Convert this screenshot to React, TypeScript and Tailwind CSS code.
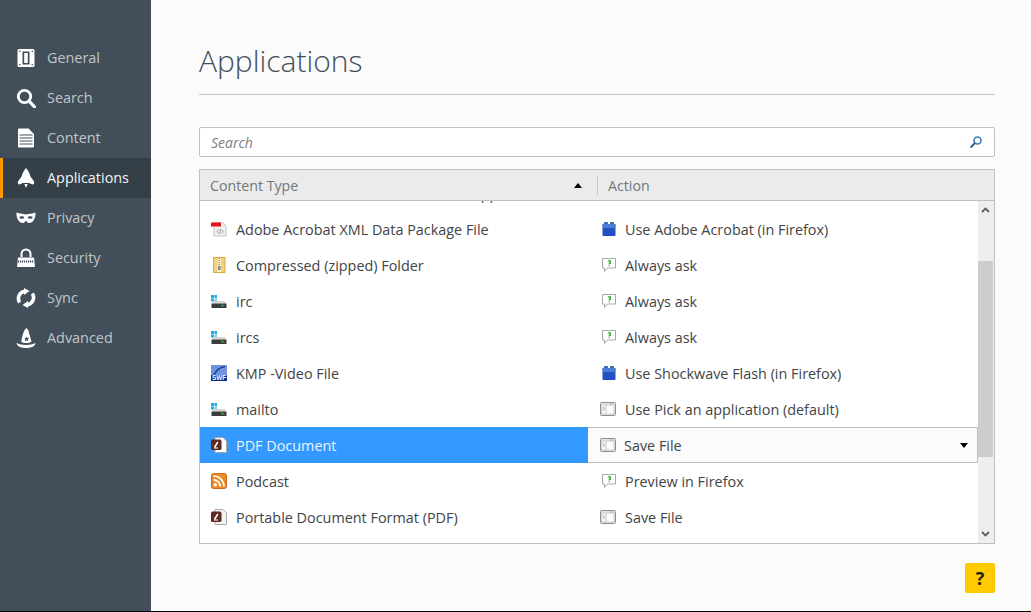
import { ReactNode } from "react";

const font = "font-['Open_Sans',sans-serif]";

// Sidebar icons, all drawn in a 20x20 box
function GeneralIcon() {
  return (
    <svg width="20" height="20" viewBox="0 0 20 20">
      <rect x="1.500" y="1" width="17" height="18" rx="1.500" fill="#fff" />
      <rect x="6.500" y="3.500" width="7" height="13" fill="#424f5a" />
      <rect x="8.200" y="5" width="3.600" height="10" fill="#fff" />
      <circle cx="3.700" cy="3.200" r=".8" fill="#424f5a" />
      <circle cx="16.300" cy="3.200" r=".8" fill="#424f5a" />
      <circle cx="3.700" cy="16.800" r=".8" fill="#424f5a" />
      <circle cx="16.300" cy="16.800" r=".8" fill="#424f5a" />
    </svg>
  );
}

function SearchIcon() {
  return (
    <svg width="20" height="20" viewBox="0 0 20 20" fill="none" stroke="#fff">
      <circle cx="8.500" cy="8.500" r="6.200" strokeWidth="2.800" />
      <path d="M13 13L18.500 18.800" strokeWidth="3.200" strokeLinecap="round" />
    </svg>
  );
}

function ContentIcon() {
  return (
    <svg width="20" height="20" viewBox="0 0 20 20">
      <path d="M2 1.500a1 1 0 0 1 1-1h9.500L18 6v12.500a1 1 0 0 1-1 1H3a1 1 0 0 1-1-1z" fill="#fff" />
      <path d="M3.500 7h13M3.500 10h13M3.500 13h13M3.500 16h13" stroke="#424f5a" strokeWidth="1" />
    </svg>
  );
}

function RocketIcon() {
  return (
    <svg width="20" height="20" viewBox="0 0 20 20" fill="#fff">
      <path d="M10 0C12 2 13.500 5 14.500 8.500L18 13.500C18.500 15 18 16.500 16.500 16.500L13 15H7L3.500 16.500C2 16.500 1.500 15 2 13.500L5.500 8.500C6.500 5 8 2 10 0Z" />
      <path d="M8.300 16h3.400L10 20z" />
    </svg>
  );
}

function MaskIcon() {
  return (
    <svg width="20" height="20" viewBox="0 0 20 20">
      <path d="M.5 4.500C4 6 7 5.500 10 6.500C13 5.500 16 6 19.500 4.500C20 10 17 15 13 15C11.200 15 11 13 10 13C9 13 8.800 15 7 15C3 15 0 10 .5 4.500Z" fill="#fff" />
      <ellipse cx="5.800" cy="9.500" rx="2.400" ry="1.300" fill="#424f5a" />
      <ellipse cx="14.200" cy="9.500" rx="2.400" ry="1.300" fill="#424f5a" />
    </svg>
  );
}

function LockIcon() {
  return (
    <svg width="20" height="20" viewBox="0 0 20 20">
      <path d="M5.500 9V6a4.500 4.500 0 0 1 9 0v3" fill="none" stroke="#fff" strokeWidth="2" />
      <path d="M2 9.500h16l1 9.500H1z" fill="#fff" />
      <path d="M2 13.500h16" stroke="#424f5a" strokeWidth="2.200" strokeDasharray="1.200 .8" />
    </svg>
  );
}

function SyncIcon() {
  return (
    <svg width="20" height="20" viewBox="0 0 20 20" fill="none" stroke="#fff" strokeWidth="3.600">
      <path d="M3.600 14.500C1 10 3 4.500 8.500 3.200" />
      <path d="M16.400 5.500C19 10 17 15.500 11.500 16.800" />
      <path d="M8 0L13.500 3 8 7z" fill="#fff" stroke="none" />
      <path d="M12 13L6.500 17l5.500 3z" fill="#fff" stroke="none" />
    </svg>
  );
}

function HatIcon() {
  return (
    <svg width="20" height="20" viewBox="0 0 20 20">
      <path d="M10.500 0C8 2 6.800 5.500 5.200 13.500C7.500 15.500 13 15.500 15.500 13.500L13.500 6.500C13 5 12.500 4 12.700 2.700z" fill="#fff" />
      <path d="M.5 15C3 16 6 17 10 17C14 17 17 16 19.500 15C19.500 18 15 20 10 20C5 20 .5 18 .5 15Z" fill="#fff" />
      <path d="M10.500 8l.8 1.800 1.900.2-1.400 1.300.4 1.900-1.700-1-1.700 1 .4-1.900L8.800 10l1.900-.2z" fill="#424f5a" />
    </svg>
  );
}

// File type icons, 16x16
function PdfXmlIcon() {
  return (
    <svg width="16" height="16" viewBox="0 0 16 16">
      <path d="M3 1.500h8.500L15 5v10H3z" fill="#f0f0f0" stroke="#c9c9c9" />
      <rect x="0" y="1.500" width="10" height="4" fill="#e8141a" />
      <path d="M7.500 8.500L6 10.500l1.500 2M10.500 8.500l1.500 2-1.500 2M9.500 8L8.500 13" fill="none" stroke="#8a8a8a" strokeWidth=".8" />
    </svg>
  );
}

function ZipIcon() {
  return (
    <svg width="16" height="16" viewBox="0 0 16 16">
      <rect x="2.500" y="0.500" width="11.500" height="15" fill="#f4d27a" stroke="#d9ab3e" />
      <rect x="6.500" y="1" width="3.500" height="14" fill="#fff3c9" />
      <path d="M8.200 1v9" stroke="#777" strokeWidth="1.200" strokeDasharray="1 1" />
      <rect x="7" y="9" width="2.600" height="4" fill="#888" />
    </svg>
  );
}

function DriveIcon() {
  return (
    <svg width="16" height="16" viewBox="0 0 16 16">
      <rect x="0" y="2" width="3" height="3" fill="#26a9e0" />
      <rect x="3.500" y="2" width="2.500" height="3" fill="#26a9e0" />
      <rect x="0" y="5.500" width="3" height="3" fill="#26a9e0" />
      <rect x="3.500" y="5.500" width="2.500" height="3" fill="#7fd0f0" />
      <path d="M3 8h10.500l2 2.500H.5z" fill="#d4d4d4" />
      <rect x="0.500" y="10.500" width="15" height="4.500" rx=".5" fill="#3d3d3d" />
      <rect x="10.500" y="12" width="2" height="1.200" fill="#3fdc4b" />
    </svg>
  );
}

function SwfIcon() {
  return (
    <svg width="16" height="16" viewBox="0 0 16 16">
      <rect width="16" height="16" fill="#0b2f8f" />
      <rect width="16" height="10" fill="#6f93dc" />
      <path d="M3 10C5 5 9 2.500 14 1.500" fill="none" stroke="#1d3f96" strokeWidth="1.500" />
      <text x="8" y="15.200" textAnchor="middle" fontSize="6.400" fontWeight="700" fill="#fff" fontFamily="'Liberation Sans',sans-serif">
        SWF
      </text>
    </svg>
  );
}

function AcrobatIcon({ bright }: { bright?: boolean }) {
  return (
    <svg width="16" height="16" viewBox="0 0 16 16">
      <path d="M4 .5h8L15.500 4v11.500H4z" fill={bright ? "#fff" : "#f4f4f4"} stroke="#a9a9a9" />
      <rect x="0" y="2.500" width="10.500" height="10.500" rx="1.500" fill="#5e2a22" />
      <path d="M3.500 10.500L6.800 5" stroke="#fff" strokeWidth="1.500" />
      <path d="M3 11h4" stroke="#fff" strokeWidth="1" />
    </svg>
  );
}

function RssIcon() {
  return (
    <svg width="16" height="16" viewBox="0 0 16 16">
      <rect x=".5" y=".5" width="15" height="15" rx="2" fill="#ee8a24" stroke="#d2691a" />
      <circle cx="4.200" cy="11.800" r="1.700" fill="#fff" />
      <path d="M2.500 6.800a6.700 6.700 0 0 1 6.700 6.700M2.500 3a10.500 10.500 0 0 1 10.500 10.500" fill="none" stroke="#fff" strokeWidth="1.700" />
    </svg>
  );
}

function BlockIcon() {
  return (
    <svg width="16" height="16" viewBox="0 0 16 16">
      <rect x="3" y="1" width="4" height="3" rx="1" fill="#3d66b8" />
      <rect x="9" y="1" width="4" height="3" rx="1" fill="#3d66b8" />
      <rect x="1.500" y="3" width="13" height="12" rx="1" fill="#2350c0" />
      <rect x="1.500" y="3" width="13" height="4" fill="#4d7bd8" />
    </svg>
  );
}

function AskIcon() {
  return (
    <svg width="16" height="16" viewBox="0 0 16 16">
      <path d="M1.500 1.500h13v9.500H6.500L3.500 14.500V11h-2z" fill="#fff" stroke="#a8a8a8" />
      <path d="M6.800 3.800h2.600v2.400H8.300v1.300M8.300 8.200v1" fill="none" stroke="#2ea52e" strokeWidth="1.200" />
    </svg>
  );
}

function WindowIcon() {
  return (
    <svg width="16" height="16" viewBox="1 0 16 16" className="overflow-visible">
      <rect x="0.500" y="1.500" width="15" height="13" rx="1" fill="#e6e6e6" stroke="#8f8f8f" />
      <rect x="2" y="4" width="12" height="9" fill="#fdfdfd" stroke="#b5b5b5" strokeWidth=".6" />
      <path d="M6 4v9" stroke="#b5b5b5" strokeWidth=".8" />
      <path d="M3 7h2M3 9h2" stroke="#9a9a9a" strokeWidth=".8" />
      <path d="M10 3h4" stroke="#8f8f8f" strokeDasharray="1 1" />
    </svg>
  );
}

const navItems: { label: string; icon: ReactNode; active?: boolean }[] = [
  { label: "General", icon: <GeneralIcon /> },
  { label: "Search", icon: <SearchIcon /> },
  { label: "Content", icon: <ContentIcon /> },
  { label: "Applications", icon: <RocketIcon />, active: true },
  { label: "Privacy", icon: <MaskIcon /> },
  { label: "Security", icon: <LockIcon /> },
  { label: "Sync", icon: <SyncIcon /> },
  { label: "Advanced", icon: <HatIcon /> },
];

const rows: { type: string; icon: ReactNode; action?: string; actionIcon?: ReactNode; selected?: boolean }[] = [
  { type: "Adobe Acrobat Forms Data Format application", icon: <PdfXmlIcon /> },
  { type: "Adobe Acrobat XML Data Package File", icon: <PdfXmlIcon />, action: "Use Adobe Acrobat (in Firefox)", actionIcon: <BlockIcon /> },
  { type: "Compressed (zipped) Folder", icon: <ZipIcon />, action: "Always ask", actionIcon: <AskIcon /> },
  { type: "irc", icon: <DriveIcon />, action: "Always ask", actionIcon: <AskIcon /> },
  { type: "ircs", icon: <DriveIcon />, action: "Always ask", actionIcon: <AskIcon /> },
  { type: "KMP -Video File", icon: <SwfIcon />, action: "Use Shockwave Flash (in Firefox)", actionIcon: <BlockIcon /> },
  { type: "mailto", icon: <DriveIcon />, action: "Use Pick an application (default)", actionIcon: <WindowIcon /> },
  { type: "PDF Document", icon: <AcrobatIcon bright />, action: "Save File", actionIcon: <WindowIcon />, selected: true },
  { type: "Podcast", icon: <RssIcon />, action: "Preview in Firefox", actionIcon: <AskIcon /> },
  { type: "Portable Document Format (PDF)", icon: <AcrobatIcon />, action: "Save File", actionIcon: <WindowIcon /> },
];

function Sidebar() {
  return (
    <nav className="w-[151px] shrink-0 bg-[#424f5a] pt-[38px]">
      {navItems.map((item) => (
        <div
          key={item.label}
          className={`flex h-10 items-center border-l-[3px] pl-[13px] ${
            item.active ? "border-[#ff9500] bg-[#343f48] text-[#f2f4f5]" : "border-transparent text-[#c1c5c9]"
          }`}
        >
          <span className="flex w-5 justify-center">{item.icon}</span>
          <span className="ml-[11px] text-[14.4px]">{item.label}</span>
        </div>
      ))}
    </nav>
  );
}

function Row({ row }: { row: (typeof rows)[number] }) {
  if (row.selected) {
    return (
      <div className="flex h-9 items-stretch">
        <div className="flex w-[388px] shrink-0 items-center bg-[#3399ff] pl-[11px] text-[#eaf5ff]">
          {row.icon}
          <span className="ml-[9px] mt-[2px]">{row.type}</span>
        </div>
        <div className="flex flex-1 items-center border border-l-0 border-[#bdbdbd] bg-[#fbfbfb] pl-[13px] pr-[9px] text-[#3f4446]">
          {row.actionIcon}
          <span className="ml-[7px] mt-[2px]">{row.action}</span>
          <span className="ml-auto h-0 w-0 border-x-[4px] border-t-[5px] border-x-transparent border-t-black" />
        </div>
      </div>
    );
  }
  return (
    <div className="flex h-9 items-center text-[#3f4446]">
      <div className="flex w-[387px] shrink-0 items-center pl-[11px]">
        {row.icon}
        <span className="ml-[9px] mt-[2px] whitespace-nowrap">{row.type}</span>
      </div>
      <div className="flex flex-1 items-center pl-[14px]">
        {row.actionIcon}
        <span className="ml-[8px] mt-[2px] whitespace-nowrap">{row.action}</span>
      </div>
    </div>
  );
}

export default function App() {
  return (
    <div className={`flex h-[612px] w-[1031px] flex-col overflow-hidden bg-[#fbfbfb] text-[14.4px] ${font}`}>
      <div className="flex min-h-0 flex-1">
        <Sidebar />
        <main className="flex-1 pl-12 pr-9">
          <h1 className="flex h-[95px] items-start border-b border-[#c8c8c8] pt-[40px] text-[30px] font-light leading-[44px] text-[#424f5a]">
            <span className="-mt-[1px]">Applications</span>
          </h1>

          <div className="mt-8 flex h-[30px] items-center justify-between rounded-[2px] border border-[#c1c1c1] bg-white pl-[11px] pr-[11px]">
            <span className="text-[14px] italic text-[#7d7d7d]">Search</span>
            <svg width="14" height="14" viewBox="0 0 14 14" fill="none">
              <circle cx="8.500" cy="5.500" r="3.500" stroke="#3a7ab8" strokeWidth="1.600" />
              <path d="M6 8L1.500 12.500" stroke="#2f6296" strokeWidth="2" />
            </svg>
          </div>

          <div className="mt-3 border border-[#c1c1c1] bg-white">
            <div className="flex h-[31px] items-center border-b border-[#c1c1c1] bg-[#ebebeb] text-[14.2px] text-[#70777c]">
              <span className="ml-[10px] mt-[2px]">Content Type</span>
              <span className="ml-auto h-0 w-0 border-x-[4px] border-b-[5px] border-x-transparent border-b-black" />
              <span className="ml-[15px] h-5 w-px bg-[#c8c8c8]" />
              <span className="ml-[10px] mt-[2px] w-[386px]">Action</span>
            </div>
            <div className="flex h-[342px]">
              <div className="min-w-0 flex-1 overflow-hidden">
                <div className="-mt-[26px]">
                  {rows.map((row, i) => (
                    <Row key={i} row={row} />
                  ))}
                </div>
              </div>
              <div className="flex w-[16px] flex-col bg-[#eeeeee] pr-px">
                <div className="flex h-[60px] justify-center pt-[6px]">
                  <svg width="9" height="6" viewBox="0 0 9 6" fill="none">
                    <path d="M1 5L4.500 1.500 8 5" stroke="#606060" strokeWidth="1.800" />
                  </svg>
                </div>
                <div className="h-[196px] bg-[#cdcdcd]" />
                <div className="mt-auto flex justify-center pb-[6px]">
                  <svg width="9" height="6" viewBox="0 0 9 6" fill="none">
                    <path d="M1 1L4.500 4.500 8 1" stroke="#606060" strokeWidth="1.800" />
                  </svg>
                </div>
              </div>
            </div>
          </div>

          <div className="mt-[19px] flex justify-end">
            <button className="flex h-[30px] w-[30px] items-center justify-center rounded-[2px] bg-[#ffcb00] text-[18px] font-bold text-[#1c1c1c]">
              ?
            </button>
          </div>
        </main>
      </div>
      <div className="h-px bg-black" />
    </div>
  );
}
